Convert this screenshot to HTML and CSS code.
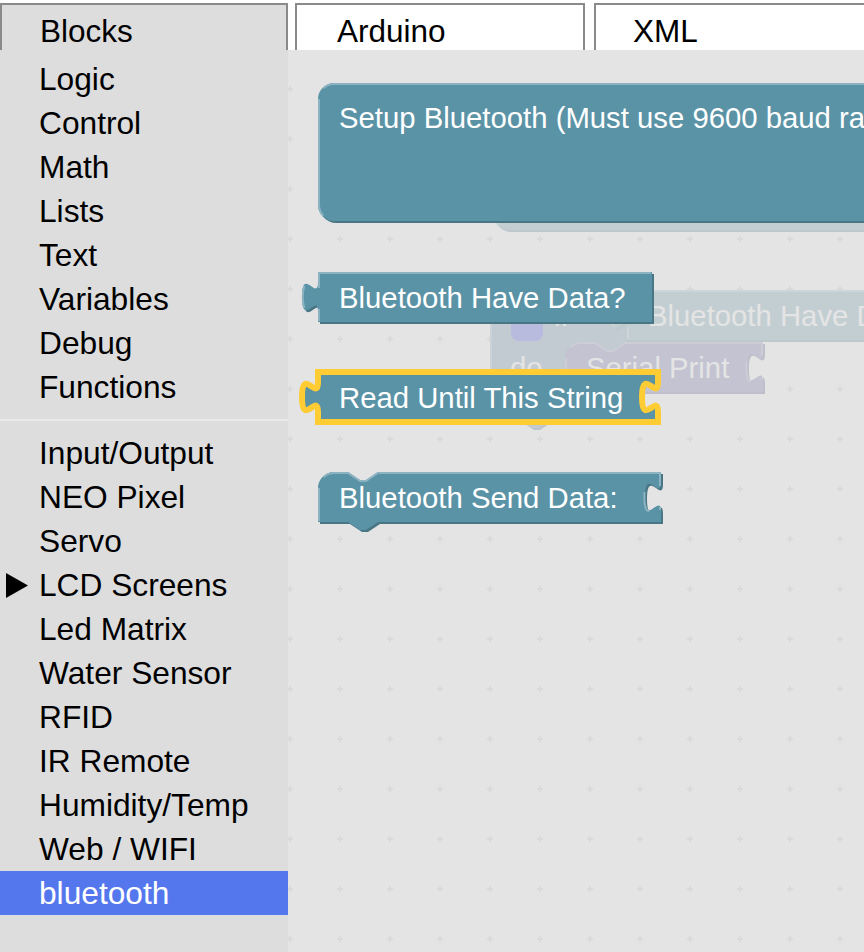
FILE: index.html
```html
<!DOCTYPE html>
<html>
<head>
<meta charset="utf-8">
<title>Blocks</title>
<link rel="stylesheet" href="styles.css">
</head>
<body>
<div class="app">
  <div class="tabs">
    <div class="tab tab-blocks">Blocks</div>
    <div class="tab tab-arduino">Arduino</div>
    <div class="tab tab-xml">XML</div>
  </div>
  <div class="main">
    <nav class="toolbox">
      <div class="row">Logic</div>
      <div class="row">Control</div>
      <div class="row">Math</div>
      <div class="row">Lists</div>
      <div class="row">Text</div>
      <div class="row">Variables</div>
      <div class="row">Debug</div>
      <div class="row">Functions</div>
      <div class="sep"></div>
      <div class="row">Input/Output</div>
      <div class="row">NEO Pixel</div>
      <div class="row">Servo</div>
      <div class="row row-caret"><svg class="caret" width="22" height="25" viewBox="0 0 22 25"><polygon points="0,0 22,12.5 0,25"/></svg>LCD Screens</div>
      <div class="row">Led Matrix</div>
      <div class="row">Water Sensor</div>
      <div class="row">RFID</div>
      <div class="row">IR Remote</div>
      <div class="row">Humidity/Temp</div>
      <div class="row">Web / WIFI</div>
      <div class="row row-selected">bluetooth</div>
    </nav>
    <div class="workspace">
      <svg class="canvas" width="576" height="902" viewBox="0 0 576 902" xmlns="http://www.w3.org/2000/svg">
        <defs>
          <pattern id="grid" x="-23" y="14" width="50" height="50" patternUnits="userSpaceOnUse">
            <rect class="grid-mark" x="22" y="24" width="6" height="2"/>
            <rect class="grid-mark" x="24" y="22" width="2" height="6"/>
          </pattern>
        </defs>
        <rect class="ws-bg" width="576" height="902"/>
        <rect class="ws-grid" width="576" height="902"/>

        <!-- workspace blocks (behind flyout) -->
        <g transform="translate(205,100) scale(2)">
          <path class="dk-teal" transform="translate(1,1)" d="m 0,0 H 400 V 40 H 8 a 8,8 0 0,1 -8,-8 z"/>
          <path class="fill-teal" d="m 0,0 H 400 V 40 H 8 a 8,8 0 0,1 -8,-8 z"/>
          <path class="lt-teal" d="M 2.7,37.3 A 7.5,7.5 0 0,1 0.5,32 V 0"/>
        </g>

        <g transform="translate(202,240) scale(2)">
          <path class="dk-blue" transform="translate(1,1)" d="m 0,8 A 8,8 0 0,1 8,0 H 15 l 6,4 3,0 6,-4 H 68.5 v 5 c 0,10 -8,-8 -8,7.5 s 8,-2.5 8,7.5 V 26 H 67.5 l -6,4 -3,0 -6,-4 H 45.5 a 8,8 0 0,0 -8,8 V 43 a 8,8 0 0,0 8,8 H 56 V 65 H 30 l -6,4 -3,0 -6,-4 H 0 z"/>
          <path class="fill-blue" d="m 0,8 A 8,8 0 0,1 8,0 H 15 l 6,4 3,0 6,-4 H 68.5 v 5 c 0,10 -8,-8 -8,7.5 s 8,-2.5 8,7.5 V 26 H 67.5 l -6,4 -3,0 -6,-4 H 45.5 a 8,8 0 0,0 -8,8 V 43 a 8,8 0 0,0 8,8 H 56 V 65 H 30 l -6,4 -3,0 -6,-4 H 0 z"/>
          <path class="lt-blue" d="m 2.7,2.7 A 7.5,7.5 0 0,1 8,0.5 H 15 l 6,4 3,0 6,-4 H 68 M 0.5,64.5 V 8"/>
          <g class="icon">
            <rect class="icon-shape" x="10.5" y="9.5" width="16" height="16" rx="4"/>
          </g>
          <text class="blk-text" x="32" y="18">if</text>
          <text class="blk-text" x="10" y="44">do</text>
        </g>

        <g transform="translate(339,240) scale(2)">
          <path class="dk-teal" transform="translate(1,1)" d="m 0,0 H 200 V 25 H 0 V 20 c 0,-10 -8,8 -8,-7.5 s 8,2.5 8,-7.5 z"/>
          <path class="fill-teal" d="m 0,0 H 200 V 25 H 0 V 20 c 0,-10 -8,8 -8,-7.5 s 8,2.5 8,-7.5 z"/>
          <path class="lt-teal" d="m 0.5,0.5 H 200 M 0.5,24.5 V 18.5 m -7.36,-0.5 q -1.52,-5.5 0,-11 m 7.36,1 V 0.5 H 1"/>
          <text class="blk-text" x="10.5" y="18">Bluetooth Have Data?</text>
        </g>

        <g transform="translate(277,292) scale(2)">
          <path class="dk-purple" transform="translate(1,1)" d="m 0,8 A 8,8 0 0,1 8,0 H 15 l 6,4 3,0 6,-4 H 99 v 5 c 0,10 -8,-8 -8,7.5 s 8,-2.5 8,7.5 V 25 H 30 l -6,4 -3,0 -6,-4 H 0 z"/>
          <path class="fill-purple" d="m 0,8 A 8,8 0 0,1 8,0 H 15 l 6,4 3,0 6,-4 H 99 v 5 c 0,10 -8,-8 -8,7.5 s 8,-2.5 8,7.5 V 25 H 30 l -6,4 -3,0 -6,-4 H 0 z"/>
          <path class="lt-purple" d="m 2.7,2.7 A 7.5,7.5 0 0,1 8,0.5 H 15 l 6,4 3,0 6,-4 H 98.5 v 6.5 m -7.76,3 q -0.4,10 2.4,9.5 m 5.36,-1.9 v 1.4 M 0.5,24.5 V 8"/>
          <text class="blk-text" x="10.5" y="18">Serial Print</text>
        </g>

        <!-- flyout background -->
        <rect class="flyout-bg" width="576" height="902"/>

        <!-- flyout blocks -->
        <g transform="translate(30,33) scale(2)">
          <path class="dk-teal" transform="translate(1,1)" d="m 0,8 A 8,8 0 0,1 8,0 H 400 V 69 H 8 a 8,8 0 0,1 -8,-8 z"/>
          <path class="fill-teal" d="m 0,8 A 8,8 0 0,1 8,0 H 400 V 69 H 8 a 8,8 0 0,1 -8,-8 z"/>
          <path class="lt-teal" d="m 2.7,2.7 A 7.5,7.5 0 0,1 8,0.5 H 400 M 2.7,66.3 A 7.5,7.5 0 0,1 0.5,61 V 8"/>
          <text class="blk-text" x="10.5" y="22.5">Setup Bluetooth (Must use 9600 baud rate)</text>
        </g>

        <g transform="translate(30,222) scale(2)">
          <path class="dk-teal" transform="translate(1,1)" d="m 0,0 H 167 V 25 H 0 V 20 c 0,-10 -8,8 -8,-7.5 s 8,2.5 8,-7.5 z"/>
          <path class="fill-teal" d="m 0,0 H 167 V 25 H 0 V 20 c 0,-10 -8,8 -8,-7.5 s 8,2.5 8,-7.5 z"/>
          <path class="lt-teal" d="m 0.5,0.5 H 166.5 M 0.5,24.5 V 18.5 m -7.36,-0.5 q -1.52,-5.5 0,-11 m 7.36,1 V 0.5 H 1"/>
          <text class="blk-text" x="10.5" y="18">Bluetooth Have Data?</text>
        </g>

        <g transform="translate(30,322) scale(2)">
          <path class="dk-teal" transform="translate(1,1)" d="m 0,0 H 170 v 5 c 0,10 -8,-8 -8,7.5 s 8,-2.5 8,7.5 V 25 H 0 V 20 c 0,-10 -8,8 -8,-7.5 s 8,2.5 8,-7.5 z"/>
          <path class="fill-teal selected" d="m 0,0 H 170 v 5 c 0,10 -8,-8 -8,7.5 s 8,-2.5 8,7.5 V 25 H 0 V 20 c 0,-10 -8,8 -8,-7.5 s 8,2.5 8,-7.5 z"/>
          <text class="blk-text" x="10.5" y="18">Read Until This String</text>
        </g>

        <g transform="translate(30,422) scale(2)">
          <path class="dk-teal" transform="translate(1,1)" d="m 0,8 A 8,8 0 0,1 8,0 H 15 l 6,4 3,0 6,-4 H 171.5 v 5 c 0,10 -8,-8 -8,7.5 s 8,-2.5 8,7.5 V 25 H 30 l -6,4 -3,0 -6,-4 H 0 z"/>
          <path class="fill-teal" d="m 0,8 A 8,8 0 0,1 8,0 H 15 l 6,4 3,0 6,-4 H 171.5 v 5 c 0,10 -8,-8 -8,7.5 s 8,-2.5 8,7.5 V 25 H 30 l -6,4 -3,0 -6,-4 H 0 z"/>
          <path class="lt-teal" d="m 2.7,2.7 A 7.5,7.5 0 0,1 8,0.5 H 15 l 6,4 3,0 6,-4 H 171 v 6.5 m -7.76,3 q -0.4,10 2.4,9.5 m 5.36,-1.9 v 1.4 M 0.5,24.5 V 8"/>
          <text class="blk-text" x="10.5" y="18">Bluetooth Send Data:</text>
        </g>
      </svg>
    </div>
  </div>
</div>
</body>
</html>
```

FILE: styles.css
```css
* {
  box-sizing: border-box;
}

html,
body {
  margin: 0;
  padding: 0;
  background: #fff;
}

body {
  width: 864px;
  height: 952px;
  overflow: hidden;
  font-family: "Liberation Sans", Arial, sans-serif;
  color: #000;
}

.app {
  display: flex;
  flex-direction: column;
  width: 864px;
  height: 952px;
}

/* ---------- tabs ---------- */
.tabs {
  display: flex;
  height: 50px;
  padding-top: 3px;
  flex: none;
}

.tab {
  height: 47px;
  border: 2px solid #8a8a8a;
  border-bottom: none;
  padding-top: 8px;
  font-size: 31.5px;
  line-height: 36px;
  white-space: nowrap;
  flex: none;
}

.tab-blocks {
  width: 288px;
  padding-left: 38px;
  background: #ddd;
}

.tab-arduino {
  width: 290px;
  margin-left: 7px;
  padding-left: 40px;
  background: #fff;
}

.tab-xml {
  width: 290px;
  margin-left: 9px;
  padding-left: 37px;
  background: #fff;
}

/* ---------- main ---------- */
.main {
  display: flex;
  flex: 1;
  min-height: 0;
}

.toolbox {
  width: 288px;
  flex: none;
  background: #ddd;
  padding-top: 7px;
}

.row {
  display: flex;
  align-items: center;
  height: 44px;
  line-height: 44px;
  font-size: 31.7px;
  padding-left: 39px;
  white-space: nowrap;
  color: #000;
}

.row-caret {
  padding-left: 6px;
}

.caret {
  display: block;
  margin-right: 11px;
  fill: #000;
}

.row-selected {
  background: #57e;
  color: #fff;
}

.sep {
  margin: 10px 0;
  border-bottom: 2px solid #e9e9e9;
}

.workspace {
  flex: 1;
  overflow: hidden;
}

.canvas {
  display: block;
}

/* ---------- svg canvas ---------- */
.ws-bg {
  fill: #fff;
}

.ws-grid {
  fill: url(#grid);
}

.grid-mark {
  fill: #ccc;
}

.flyout-bg {
  fill: #ddd;
  fill-opacity: 0.8;
}

.fill-teal {
  fill: #5b93a6;
}

.dk-teal {
  fill: #497685;
}

.lt-teal {
  fill: none;
  stroke: #8cb3c1;
  stroke-width: 1px;
}

.fill-blue {
  fill: #5b80a5;
}

.dk-blue {
  fill: #496684;
}

.lt-blue {
  fill: none;
  stroke: #8ca6c0;
  stroke-width: 1px;
}

.fill-purple {
  fill: #5b5ba6;
}

.dk-purple {
  fill: #494985;
}

.lt-purple {
  fill: none;
  stroke: #8c8cc1;
  stroke-width: 1px;
}

.selected {
  stroke: #fc3;
  stroke-width: 3px;
}

.icon {
  opacity: 0.6;
}

.icon-shape {
  fill: #00f;
}

.blk-text {
  fill: #fff;
  font-family: "Liberation Sans", Arial, sans-serif;
  font-size: 14.65px;
}
```
